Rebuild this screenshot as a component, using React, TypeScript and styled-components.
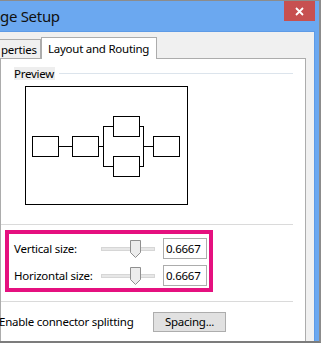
import React from "react";
import styled, { createGlobalStyle, css } from "styled-components";

const Global = createGlobalStyle`
  html, body { margin: 0; padding: 0; overflow: hidden; background: #ffffff; }
  * { box-sizing: border-box; }
`;

const FONT = `"Noto Sans", "Open Sans", "DejaVu Sans", sans-serif`;

const uiText = css`
  font-size: 11.5px;
  letter-spacing: -0.25px;
  white-space: nowrap;
`;

const Window = styled.div`
  width: 321px;
  height: 343px;
  display: flex;
  flex-direction: column;
  background: #6ba8f0;
  border-top: 1px solid #8c8c8c;
  border-right: 2px solid #8c8c8c;
  border-bottom: 2px solid #7c7c7c;
  overflow: hidden;
  font-family: ${FONT};
  color: #000;
`;

const TitleBar = styled.div`
  height: 30px;
  flex: none;
  display: flex;
  align-items: flex-start;
  justify-content: space-between;
`;

const Title = styled.div`
  margin-top: 5px;
  font-size: 15px;
  line-height: 20px;
  white-space: nowrap;
  letter-spacing: -0.3px;
  color: #111;
`;

const CloseButton = styled.div`
  width: 31px;
  height: 20px;
  margin-right: 4px;
  background: #c75050;
  display: flex;
  align-items: center;
  justify-content: center;
`;

const Body = styled.div`
  flex: 1;
  display: flex;
  min-height: 0;
`;

const Content = styled.div`
  width: 315px;
  flex: none;
  background: #f0f0f0;
  border-top: 1px solid #5e9be6;
  border-right: 1px solid #5e9be6;
  padding-top: 5px;
  display: flex;
  flex-direction: column;
`;

const TabRow = styled.div`
  height: 21px;
  display: flex;
  align-items: flex-end;
`;

const Tab = styled.div<{ $active?: boolean }>`
  ${uiText};
  position: relative;
  z-index: ${(p) => (p.$active ? 1 : 0)};
  height: ${(p) => (p.$active ? 22 : 19)}px;
  margin-bottom: ${(p) => (p.$active ? -1 : 0)}px;
  width: ${(p) => (p.$active ? 116 : 41)}px;
  background: ${(p) => (p.$active ? "#ffffff" : "#f0f0f0")};
  border-top: 1px solid #acacac;
  border-left: ${(p) => (p.$active ? "1px solid #acacac" : "none")};
  border-right: 1px solid #acacac;
  padding-left: ${(p) => (p.$active ? 6 : 1)}px;
  padding-top: ${(p) => (p.$active ? 3 : 2)}px;
  line-height: 16px;
  overflow: hidden;
`;

const Panel = styled.div`
  width: 306px;
  flex: 1;
  background: #ffffff;
  border: 1px solid #acacac;
  border-bottom: none;
  display: flex;
  flex-direction: column;
`;

const GroupHeader = styled.div`
  margin-top: 8px;
  margin-left: 13px;
  margin-right: 12px;
  display: flex;
  align-items: center;
  gap: 4px;
`;

const GroupLabel = styled.div`
  ${uiText};
  background: #eeeeee;
  line-height: 13px;
  height: 13px;
  padding-right: 1px;
`;

const Rule = styled.div`
  flex: 1;
  height: 1px;
  background: #dce4ec;
`;

const Preview = styled.div`
  margin-top: 6px;
  margin-left: 24px;
  width: 163px;
  height: 119px;
  border: 1px solid #000;
  background: #fff;
  display: flex;
`;

const Separator = styled.div<{ $top: number }>`
  margin-top: ${(p) => p.$top}px;
  margin-right: 12px;
  height: 1px;
  flex: none;
  background: #dadada;
`;

const Highlight = styled.div`
  margin-top: 5px;
  margin-left: 4px;
  width: 208px;
  height: 62px;
  border: 4px solid #e5107f;
  padding: 4px 0 2px 5px;
  display: flex;
  flex-direction: column;
  gap: 6px;
`;

const SizeRow = styled.div`
  height: 21px;
  display: flex;
  align-items: center;
`;

const SizeLabel = styled.div`
  ${uiText};
  width: 87px;
  line-height: 16px;
`;

const SliderArt = styled.svg`
  width: 54px;
  height: 21px;
  margin-right: 8px;
  flex: none;
  display: block;
`;

const NumberBox = styled.div`
  ${uiText};
  width: 44px;
  height: 21px;
  border: 1px solid #acacac;
  background: #fff;
  padding-left: 2px;
  line-height: 19px;
`;

const BottomRow = styled.div`
  margin-top: 10px;
  display: flex;
  align-items: center;
`;

const CheckText = styled.div`
  ${uiText};
  width: 154px;
  margin-left: -2px;
  line-height: 16px;
`;

const PushButton = styled.div`
  ${uiText};
  width: 73px;
  height: 20px;
  background: #e1e1e1;
  border: 1px solid #adadad;
  line-height: 17px;
  text-align: center;
`;

const Slider: React.FC = () => (
  <SliderArt viewBox="0 0 54 21">
    <rect x="0.5" y="9.5" width="53" height="3" fill="#e7e7e7" stroke="#d6d6d6" />
    <path
      d="M29.5 2.5 H39.5 V14.5 L34.5 19.5 L29.5 14.5 Z"
      fill="#ececec"
      stroke="#8f8f8f"
    />
  </SliderArt>
);

const Diagram: React.FC = () => (
  <svg width="161" height="117" viewBox="26 87 161 117" style={{ display: "block" }}>
    <g fill="none" stroke="#000" strokeWidth="1" shapeRendering="crispEdges">
      <rect x="32.5" y="136.5" width="26" height="20" />
      <line x1="59" y1="146.5" x2="72" y2="146.5" />
      <rect x="72.5" y="136.5" width="26" height="20" />
      <line x1="99" y1="146.5" x2="103" y2="146.5" />
      <line x1="103.5" y1="126" x2="103.5" y2="167" />
      <line x1="103" y1="126.5" x2="113" y2="126.5" />
      <line x1="103" y1="166.5" x2="113" y2="166.5" />
      <rect x="113.5" y="116.5" width="26" height="20" />
      <rect x="113.5" y="156.5" width="26" height="20" />
      <line x1="140" y1="126.5" x2="143.5" y2="126.5" />
      <line x1="140" y1="166.5" x2="143.5" y2="166.5" />
      <line x1="143.5" y1="126" x2="143.5" y2="167" />
      <line x1="143" y1="146.5" x2="153" y2="146.5" />
      <rect x="153.5" y="136.5" width="26" height="20" />
    </g>
  </svg>
);

export default function App() {
  return (
    <>
      <Global />
      <Window>
        <TitleBar>
          <Title>ge Setup</Title>
          <CloseButton>
            <svg width="9" height="9" viewBox="0 0 9 9">
              <path d="M1 1 L8 8 M8 1 L1 8" stroke="#fff" strokeWidth="1.8" />
            </svg>
          </CloseButton>
        </TitleBar>
        <Body>
          <Content>
            <TabRow>
              <Tab>perties</Tab>
              <Tab $active>Layout and Routing</Tab>
            </TabRow>
            <Panel>
              <GroupHeader>
                <GroupLabel>Preview</GroupLabel>
                <Rule />
              </GroupHeader>
              <Preview>
                <Diagram />
              </Preview>
              <Separator $top={19} />
              <Highlight>
                <SizeRow>
                  <SizeLabel>Vertical size:</SizeLabel>
                  <Slider />
                  <NumberBox>0.6667</NumberBox>
                </SizeRow>
                <SizeRow>
                  <SizeLabel>Horizontal size:</SizeLabel>
                  <Slider />
                  <NumberBox>0.6667</NumberBox>
                </SizeRow>
              </Highlight>
              <Separator $top={9} />
              <BottomRow>
                <CheckText>Enable connector splitting</CheckText>
                <PushButton>Spacing...</PushButton>
              </BottomRow>
            </Panel>
          </Content>
        </Body>
      </Window>
    </>
  );
}
